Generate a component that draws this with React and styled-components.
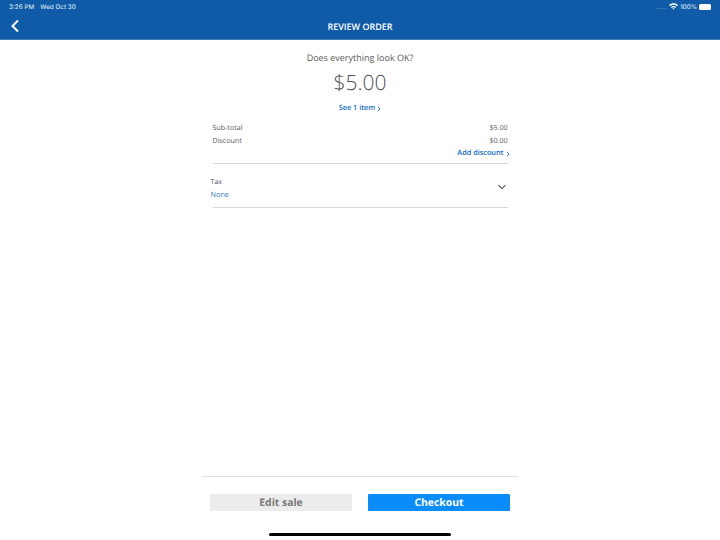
import React from 'react';
import styled, { createGlobalStyle } from 'styled-components';

const Global = createGlobalStyle`
  html, body {
    margin: 0;
    padding: 0;
    background: #fff;
    text-rendering: geometricPrecision;
  }
  * {
    box-sizing: border-box;
  }
`;

const Page = styled.div`
  width: 720px;
  height: 540px;
  display: flex;
  flex-direction: column;
  overflow: hidden;
  font-family: 'Open Sans', sans-serif;
  color: #58595b;
`;

const Header = styled.header`
  height: 40px;
  flex-shrink: 0;
  background: #0f5ba7;
  border-bottom: 1px solid #3f7dba;
  color: #fff;
`;

const StatusBar = styled.div`
  height: 13px;
  display: flex;
  align-items: center;
  justify-content: space-between;
  padding: 0 9px 0 9px;
  font-family: 'Inter', 'Liberation Sans', sans-serif;
  font-size: 6.3px;
  font-weight: 500;
  color: #d5e2f0;
`;

const StatusGroup = styled.div`
  display: flex;
  align-items: center;
  gap: ${(p) => p.$gap}px;
`;

const Dots = styled.span`
  font-size: 7px;
  letter-spacing: 0.6px;
  color: #7fa6cf;
`;

const Battery = styled.span`
  width: 12px;
  height: 6px;
  border-radius: 1.5px;
  background: #fff;
`;

const NavBar = styled.div`
  height: 26px;
  display: flex;
  align-items: center;
  justify-content: center;
  position: relative;
  font-size: 9px;
  font-weight: 600;
`;

const BackButton = styled.svg`
  position: absolute;
  left: 10px;
  top: 6px;
`;

const Content = styled.main`
  flex: 1;
  display: flex;
  flex-direction: column;
  align-items: center;
  padding-top: 10px;
`;

const Prompt = styled.div`
  font-size: 9px;
  line-height: 15px;
`;

const Total = styled.div`
  font-size: 21px;
  font-weight: 300;
  line-height: 32px;
  margin-top: 2px;
  color: #4f5052;
`;

const LinkText = styled.a`
  font-size: 7.3px;
  font-weight: 600;
  line-height: 13px;
  color: #0f6cc4;
  display: inline-flex;
  align-items: center;
  gap: 2px;
`;

const SeeItems = styled.div`
  display: flex;
  margin-top: 3px;
  margin-bottom: 6px;
`;

const Summary = styled.section`
  width: 295px;
`;

const Row = styled.div`
  height: 13px;
  display: flex;
  align-items: center;
  justify-content: space-between;
  font-size: 7.1px;
`;

const DiscountRow = styled(Row)`
  justify-content: flex-end;
  margin-right: -2px;
  margin-bottom: 3px;
`;

const Rule = styled.hr`
  width: 100%;
  height: 1px;
  margin: 0;
  border: 0;
  background: #d9d9d9;
`;

const TaxRow = styled.div`
  height: 43px;
  margin-left: -2px;
  display: flex;
  align-items: center;
  justify-content: space-between;
  padding-top: 3px;
  padding-right: 2px;
`;

const TaxText = styled.div`
  padding-top: 4px;
`;

const TaxLabel = styled.div`
  font-size: 7.1px;
  line-height: 13px;
`;

const TaxValue = styled.div`
  font-size: 7.3px;
  line-height: 13px;
  color: #2f7cc4;
`;

const Footer = styled.footer`
  width: 316px;
  align-self: center;
  flex-shrink: 0;
  border-top: 1px solid #e0e0e0;
  padding-top: 17px;
  height: 57px;
  display: flex;
  justify-content: center;
  gap: 16px;
`;

const ActionButton = styled.button`
  width: 142px;
  height: 17px;
  padding: 2px 0 0;
  border: 0;
  border-radius: 1px;
  font-family: 'Open Sans', sans-serif;
  font-size: 10.4px;
  font-weight: 700;
  line-height: 15px;
  text-rendering: geometricPrecision;
  background: ${(p) => (p.$primary ? '#0a8cfa' : '#ececec')};
  color: ${(p) => (p.$primary ? '#fff' : '#77787a')};
`;

const HomeArea = styled.div`
  height: 7px;
  flex-shrink: 0;
  display: flex;
  justify-content: center;
`;

const HomeBar = styled.div`
  width: 182px;
  height: 3px;
  border-radius: 2px;
  background: #000;
`;

const Chevron = () => (
  <svg width="4" height="6" viewBox="0 0 4 6" fill="none" stroke="currentColor" strokeWidth="0.9">
    <path d="M1 0.8 L3 3 L1 5.2" />
  </svg>
);

export default function App() {
  return (
    <Page>
      <Global />
      <Header>
        <StatusBar>
          <StatusGroup $gap={6}>
            <span>3:26 PM</span>
            <span>Wed Oct 30</span>
          </StatusGroup>
          <StatusGroup $gap={2}>
            <Dots>....</Dots>
            <svg width="9" height="7" viewBox="0 0 9 7" fill="#fff">
              <path d="M0 2.2 C2.5 -0.4 6.5 -0.4 9 2.2 L8 3.2 C6 1.2 3 1.2 1 3.2 Z" />
              <path d="M1.9 4 C3.4 2.6 5.6 2.6 7.1 4 L6.2 4.9 C5.2 4 3.8 4 2.8 4.9 Z" />
              <path d="M3.5 5.6 C4.1 5.1 4.9 5.1 5.5 5.6 L4.5 6.8 Z" />
            </svg>
            <span>100%</span>
            <Battery />
          </StatusGroup>
        </StatusBar>
        <NavBar>
          <BackButton width="10" height="14" viewBox="0 0 10 14" fill="none" stroke="#fff" strokeWidth="2">
            <path d="M8 1.5 L2.5 7 L8 12.5" />
          </BackButton>
          REVIEW ORDER
        </NavBar>
      </Header>
      <Content>
        <Prompt>Does everything look OK?</Prompt>
        <Total>$5.00</Total>
        <SeeItems>
          <LinkText>
            See 1 item <Chevron />
          </LinkText>
        </SeeItems>
        <Summary>
          <Row>
            <span>Sub-total</span>
            <span>$5.00</span>
          </Row>
          <Row>
            <span>Discount</span>
            <span>$0.00</span>
          </Row>
          <DiscountRow>
            <LinkText>
              Add discount <Chevron />
            </LinkText>
          </DiscountRow>
          <Rule />
          <TaxRow>
            <TaxText>
              <TaxLabel>Tax</TaxLabel>
              <TaxValue>None</TaxValue>
            </TaxText>
            <svg width="8" height="6" viewBox="0 0 9 6" fill="none" stroke="#4a4a4a" strokeWidth="1.2">
              <path d="M0.6 0.8 L4.5 4.8 L8.4 0.8" />
            </svg>
          </TaxRow>
          <Rule />
        </Summary>
      </Content>
      <Footer>
        <ActionButton>Edit sale</ActionButton>
        <ActionButton $primary>Checkout</ActionButton>
      </Footer>
      <HomeArea>
        <HomeBar />
      </HomeArea>
    </Page>
  );
}
